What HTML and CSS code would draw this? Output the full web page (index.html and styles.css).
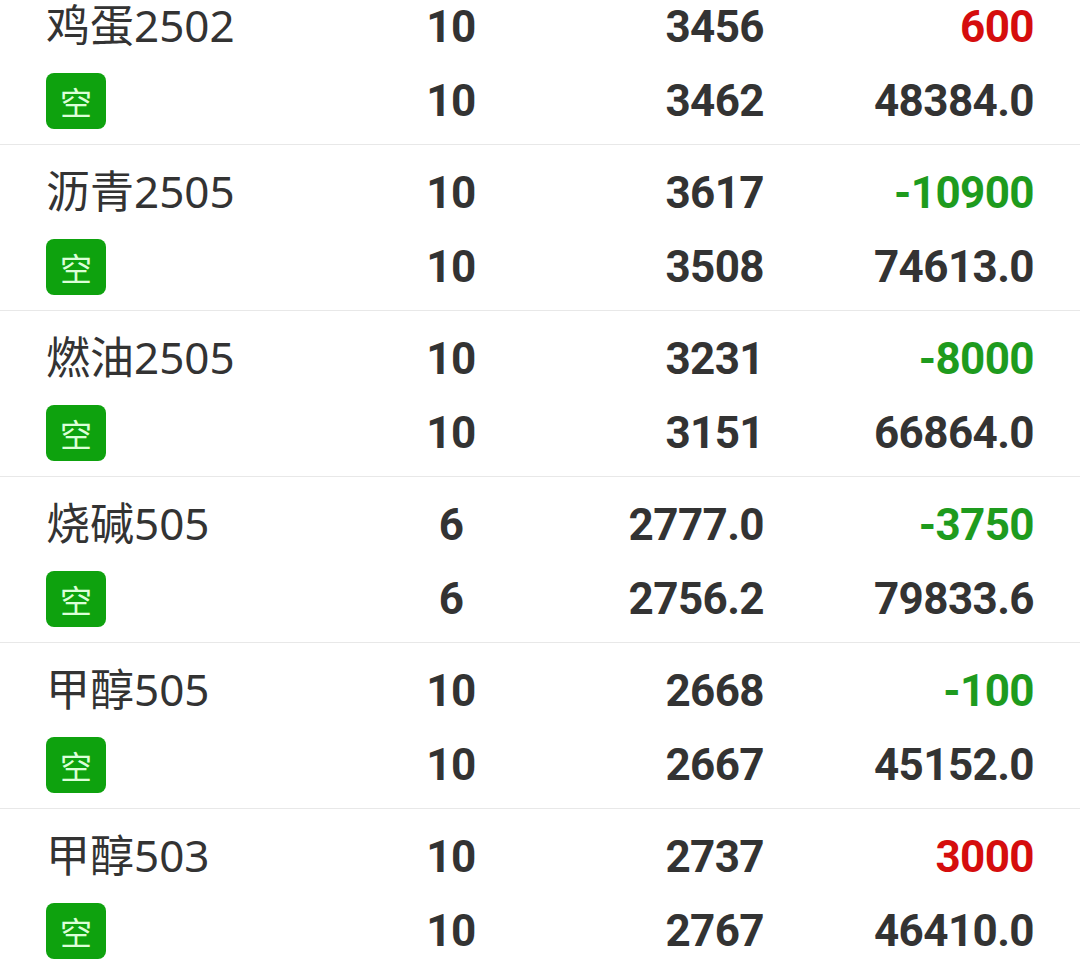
FILE: index.html
```html
<!DOCTYPE html>
<html lang="zh-CN">
<head>
<meta charset="utf-8">
<link rel="stylesheet" href="styles.css">
</head>
<body>
<div class="list">
  <div class="row">
    <div class="name">鸡蛋2502</div>
    <div class="num qty">10</div>
    <div class="num price">3456</div>
    <div class="num val up">600</div>
    <div class="tagcell"><span class="tag">空</span></div>
    <div class="num qty">10</div>
    <div class="num price">3462</div>
    <div class="num val">48384.0</div>
  </div>
  <div class="row">
    <div class="name">沥青2505</div>
    <div class="num qty">10</div>
    <div class="num price">3617</div>
    <div class="num val down">-10900</div>
    <div class="tagcell"><span class="tag">空</span></div>
    <div class="num qty">10</div>
    <div class="num price">3508</div>
    <div class="num val">74613.0</div>
  </div>
  <div class="row">
    <div class="name">燃油2505</div>
    <div class="num qty">10</div>
    <div class="num price">3231</div>
    <div class="num val down">-8000</div>
    <div class="tagcell"><span class="tag">空</span></div>
    <div class="num qty">10</div>
    <div class="num price">3151</div>
    <div class="num val">66864.0</div>
  </div>
  <div class="row">
    <div class="name">烧碱505</div>
    <div class="num qty">6</div>
    <div class="num price">2777.0</div>
    <div class="num val down">-3750</div>
    <div class="tagcell"><span class="tag">空</span></div>
    <div class="num qty">6</div>
    <div class="num price">2756.2</div>
    <div class="num val">79833.6</div>
  </div>
  <div class="row">
    <div class="name">甲醇505</div>
    <div class="num qty">10</div>
    <div class="num price">2668</div>
    <div class="num val down">-100</div>
    <div class="tagcell"><span class="tag">空</span></div>
    <div class="num qty">10</div>
    <div class="num price">2667</div>
    <div class="num val">45152.0</div>
  </div>
  <div class="row">
    <div class="name">甲醇503</div>
    <div class="num qty">10</div>
    <div class="num price">2737</div>
    <div class="num val up">3000</div>
    <div class="tagcell"><span class="tag">空</span></div>
    <div class="num qty">10</div>
    <div class="num price">2767</div>
    <div class="num val">46410.0</div>
  </div>
</div>
</body>
</html>
```

FILE: styles.css
```css
html, body {
  margin: 0;
  padding: 0;
  background: #ffffff;
  overflow: hidden;
}

.list {
  margin-top: -21px;
}

.row {
  display: grid;
  grid-template-columns: 340px 130px 248px 270px;
  grid-template-rows: 74px 74px;
  align-items: center;
  padding: 11px 46px 6px 46px;
  border-bottom: 1px solid #e8e8e8;
  color: #333333;
}

.name {
  font-family: "Noto Sans", "Noto Sans CJK SC", sans-serif;
  font-size: 44px;
  line-height: 1;
  color: #333333;
  white-space: nowrap;
  margin-top: -4px;
}

.num {
  font-family: Roboto, "Liberation Sans", sans-serif;
  font-weight: 700;
  font-size: 44px;
  letter-spacing: -0.6px;
  line-height: 1;
  color: #333333;
  white-space: nowrap;
}

.qty {
  text-align: center;
}

.price,
.val {
  text-align: right;
}

.up {
  color: #d50d0d;
}

.down {
  color: #1e9b1e;
}

.tagcell {
  display: flex;
  align-items: center;
}

.tag {
  display: inline-flex;
  align-items: center;
  justify-content: center;
  width: 60px;
  height: 56px;
  border-radius: 8px;
  background: #0ea20e;
  color: #dcffd8;
  font-family: "Noto Sans CJK SC", sans-serif;
  font-size: 32px;
  line-height: 1;
}
```
